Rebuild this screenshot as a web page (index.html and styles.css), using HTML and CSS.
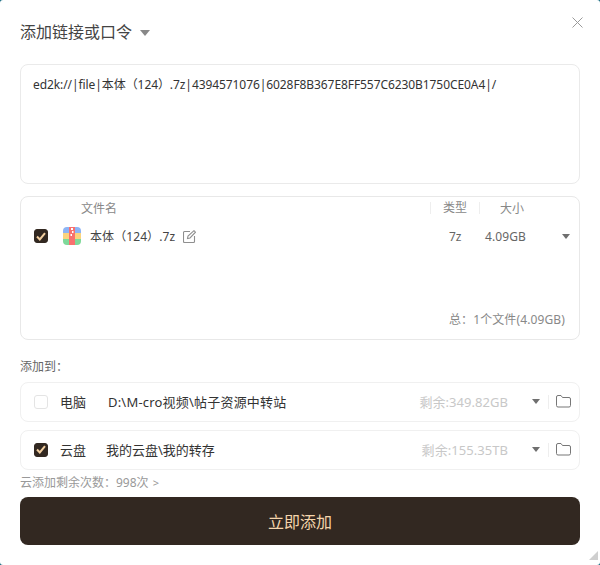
FILE: index.html
```html
<!DOCTYPE html>
<html lang="zh-CN">
<head>
<meta charset="utf-8">
<title>添加链接或口令</title>
<link rel="stylesheet" href="styles.css">
</head>
<body>
<main class="dialog">
  <svg class="close" width="11" height="11" viewBox="0 0 11 11"><path d="M.5.5l10 10M10.500.5l-10 10" stroke="#9a9a9a" stroke-width="1" fill="none"/></svg>
  <header class="title-row">
    <h1 class="title">添加链接或口令</h1>
    <span class="title-caret"></span>
  </header>
  <section class="link-box">ed2k://|file|本体（124）.7z|4394571076|6028F8B367E8FF557C6230B1750CE0A4|/</section>
  <section class="files">
    <div class="files-head">
      <span class="h-name">文件名</span>
      <span class="h-type">类型</span>
      <span class="h-size">大小</span>
    </div>
    <div class="file-row">
      <span class="check on"><svg width="10" height="9" viewBox="0 0 10 9"><path d="M1 4.500l2.800 3L9 1.200" stroke="#f3cfa0" stroke-width="2" fill="none"/></svg></span>
      <svg class="zip" width="18" height="18" viewBox="0 0 18 18"><defs><clipPath id="r"><rect width="18" height="18" rx="4"/></clipPath></defs><g clip-path="url(#r)"><rect width="18" height="6" fill="#8db4f5"/><rect y="6" width="18" height="6" fill="#fbd37e"/><rect y="12" width="18" height="6" fill="#7fd99a"/><rect x="6" width="6" height="18" fill="#f8716f"/><path d="M8 1h2v2H8zM9 4h1.500v2H9zM7.500 7H9v2H7.500z" fill="#fff"/></g></svg>
      <span class="file-name">本体（124）.7z</span>
      <svg class="edit" width="13" height="13" viewBox="0 0 13 13"><path d="M7 1.500H1.500a1 1 0 0 0-1 1v9a1 1 0 0 0 1 1h9a1 1 0 0 0 1-1V6M4.500 8.500l.5-2.500L11 .7l1.500 1.500L7 8z" stroke="#8f8f8f" stroke-width="1.100" fill="none"/></svg>
      <span class="file-type">7z</span>
      <span class="file-size">4.09GB</span>
      <span class="caret small"></span>
    </div>
    <div class="total">总：1个文件(4.09GB)</div>
  </section>
  <div class="add-to">添加到：</div>
  <div class="dest">
    <span class="check"></span>
    <span class="dest-name">电脑</span>
    <span class="dest-path path-pc">D:\M-cro视频\帖子资源中转站</span>
    <span class="free">剩余:349.82GB</span>
    <span class="caret"></span>
    <span class="sep"></span>
    <svg class="folder" width="15" height="13" viewBox="0 0 15 13"><path d="M.5 2A1.500 1.500 0 0 1 2 .5h3l1.500 2H13A1.500 1.500 0 0 1 14.500 4v6.500A1.500 1.500 0 0 1 13 12H2A1.500 1.500 0 0 1 .5 10.500z" stroke="#777" fill="none"/></svg>
  </div>
  <div class="dest">
    <span class="check on"><svg width="10" height="9" viewBox="0 0 10 9"><path d="M1 4.500l2.800 3L9 1.200" stroke="#f3cfa0" stroke-width="2" fill="none"/></svg></span>
    <span class="dest-name">云盘</span>
    <span class="dest-path path-cloud">我的云盘\我的转存</span>
    <span class="free">剩余:155.35TB</span>
    <span class="caret"></span>
    <span class="sep"></span>
    <svg class="folder" width="15" height="13" viewBox="0 0 15 13"><path d="M.5 2A1.500 1.500 0 0 1 2 .5h3l1.500 2H13A1.500 1.500 0 0 1 14.500 4v6.500A1.500 1.500 0 0 1 13 12H2A1.500 1.500 0 0 1 .5 10.500z" stroke="#777" fill="none"/></svg>
  </div>
  <div class="quota">云添加剩余次数：998次 <span class="gt">&gt;</span></div>
  <button class="submit">立即添加</button>
  <span class="grip"></span>
</main>
</body>
</html>
```
FILE: styles.css
```css
* { box-sizing: border-box; }
html, body { margin: 0; height: 100%; }
body {
  width: 600px;
  height: 565px;
  overflow: hidden;
  background: #14697f;
  font-family: "Noto Sans", "Noto Sans CJK SC", sans-serif;
  color: #333;
}
.dialog {
  position: relative;
  height: 565px;
  padding: 20px 20px 0;
  background: #fff;
  border-radius: 3px;
  display: flex;
  flex-direction: column;
}
.close { position: absolute; top: 17px; left: 572px; }
.grip {
  position: absolute;
  left: 589px;
  top: 551px;
  width: 9px;
  height: 9px;
  background: #cfcfcf;
  clip-path: polygon(100% 0, 100% 100%, 0 100%);
}
.title-row { display: flex; align-items: center; height: 24px; gap: 8px; }
.title { margin: 0; font-size: 16px; font-weight: 400; color: #444; line-height: 24px; }
.title-caret {
  width: 0; height: 0;
  border-left: 5.500px solid transparent;
  border-right: 5.500px solid transparent;
  border-top: 6px solid #888;
  margin-top: 2px;
}
.link-box {
  margin-top: 20px;
  height: 120px;
  border: 1px solid #eaeaea;
  border-radius: 8px;
  padding: 11px 12px;
  font-size: 12px;
  line-height: 18px;
  letter-spacing: -0.08px;
  color: #333;
}
.files {
  margin-top: 12px;
  height: 144px;
  border: 1px solid #e8e8e8;
  border-radius: 8px;
  display: flex;
  flex-direction: column;
  padding: 0 0 11px;
}
.files-head {
  display: flex;
  align-items: center;
  height: 22px;
  font-size: 12px;
  color: #888;
}
.h-name { margin-left: 60px; flex: 1; }
.h-type {
  width: 50px;
  text-align: center;
  border-left: 1px solid #eee;
  border-right: 1px solid #eee;
  line-height: 12px;
}
.h-size { flex: none; width: 99px; padding-left: 20px; }
.file-row {
  display: flex;
  align-items: center;
  height: 26px;
  margin-top: 4px;
  font-size: 12px;
  color: #444;
}
.check {
  width: 14px; height: 14px;
  border: 1px solid #e4e4e4;
  border-radius: 3px;
  display: flex; align-items: center; justify-content: center;
  flex: none;
}
.check.on { background: #322821; border-color: #322821; }
.file-row .check { margin-left: 13px; }
.zip { margin-left: 15px; flex: none; }
.file-name { margin-left: 9px; letter-spacing: .08px; }
.edit { margin-left: 8px; }
.file-type { margin-left: auto; width: 14px; color: #666; }
.file-size { margin-left: 22px; width: 77px; color: #666; letter-spacing: .1px; }
.caret {
  width: 0; height: 0;
  border-left: 4.500px solid transparent;
  border-right: 4.500px solid transparent;
  border-top: 5px solid #6f6f6f;
  flex: none;
}
.caret.small { margin-right: 9px; border-left-width: 4px; border-right-width: 4px; }
.total { margin-top: auto; text-align: right; padding-right: 14px; font-size: 12px; color: #888; line-height: 16px; letter-spacing: .12px; }
.add-to { margin-top: 19px; font-size: 12px; line-height: 16px; color: #666; }
.dest {
  margin-top: 8px;
  height: 40px;
  border: 1px solid #f0f0f0;
  border-radius: 8px;
  display: flex;
  align-items: center;
  padding: 0 8px 1px 13px;
  font-size: 13px;
}
.add-to + .dest { margin-top: 7px; }
.dest-name { margin-left: 12px; width: 48px; color: #333; }
.path-pc { letter-spacing: .2px; }
.path-cloud { margin-left: -2px; }
.free { margin-left: auto; font-size: 13px; color: #c8c8c8; letter-spacing: .05px; }
.dest .caret { margin-left: 24px; }
.sep { width: 1px; height: 14px; background: #eee; margin: 0 7px 0 8px; }
.folder { flex: none; }
.quota { margin-top: 5px; font-size: 12px; line-height: 16px; color: #999; }
.gt { font-size: 11px; margin-left: 1px; }
.submit {
  margin-top: 6px;
  height: 48px;
  border: 0;
  border-radius: 8px;
  background: #322821;
  color: #f5d5ac;
  font-family: inherit;
  font-size: 16px;
  padding: 0;
}
```
